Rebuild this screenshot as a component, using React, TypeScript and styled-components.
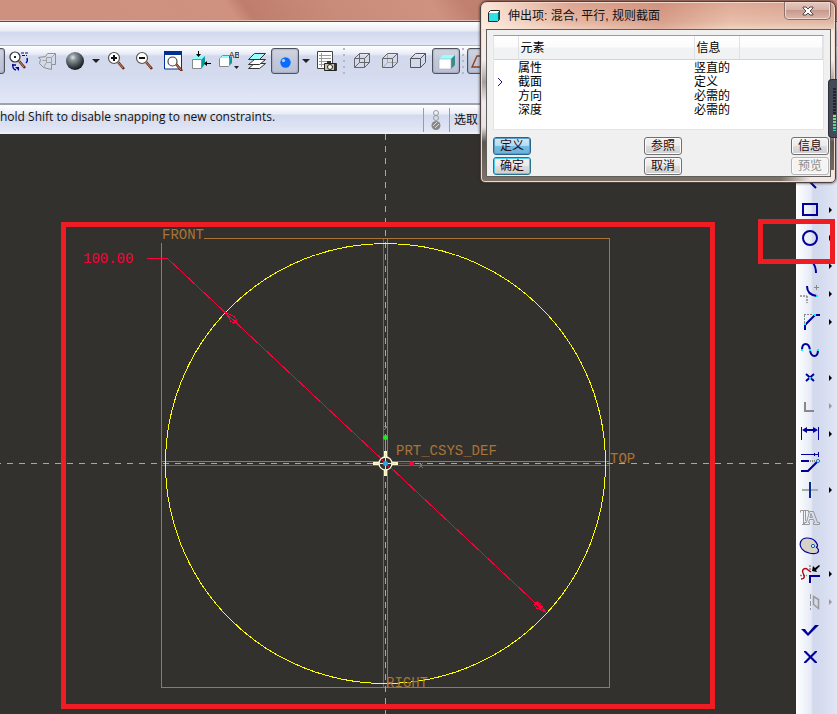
import React from 'react';
import styled, { createGlobalStyle } from 'styled-components';

const UI = '"Noto Sans", "Noto Sans CJK SC", sans-serif';
const CJK = '"Liberation Sans", "Noto Sans CJK SC", sans-serif';
const NAVY = '#00009c';
const CYAN = '#00f0ff';
const TAN = '#a87438';
const AXIS = '#ff9a0e';
const RED = '#ff0038';

const GlobalStyle = createGlobalStyle`
  *, *::before, *::after { box-sizing: border-box; }
  body { margin: 0; font-family: ${UI}; }
  button { font: inherit; padding: 0; margin: 0; border: 0; background: none; color: inherit; }
`;

const Page = styled.div`
  position: relative;
  display: flex;
  flex-direction: column;
  min-height: 100vh;
  overflow: hidden;
  background: #33312d;
`;

const WindowTitle = styled.header`
  height: 22px;
  background: linear-gradient(55deg, #ce9180 0 12%, #d0917f 28%, #bf7e6d 30%, #c98b79 40%, #cf9281 52%, #c08070 56%, #cb8b79 100%);
  border-bottom: 1px solid #6b4745;
  box-shadow: inset 0 -1px 0 #e2bdb3;
`;

const MenuStrip = styled.div`
  height: 24px;
  border-bottom: 1px solid #b3b6c6;
  background: linear-gradient(#ffffff 0, #e9edf5 9px, #d2d9ec 10px, #e2e7f7 100%);
`;

const Toolbar = styled.div`
  display: flex;
  align-items: flex-start;
  height: 59px;
  padding-top: 2px;
  overflow: hidden;
  border-bottom: 2px solid #a2a3aa;
  background: linear-gradient(#ffffff 0, #e8ecf5 8px, #d2d9ed 10px, #d4dbef 30px, #e3e8f8 100%);
`;

const ToolButton = styled.button<{ $on?: boolean; $clipped?: boolean }>`
  display: flex;
  flex: none;
  align-items: center;
  justify-content: center;
  width: 28px;
  height: 26px;
  margin-left: ${(p) => (p.$clipped ? '-23px' : '0')};
  border: ${(p) => (p.$on ? '1px solid #4e5260' : '1px solid transparent')};
  border-radius: 3px;
  background: ${(p) => (p.$on ? 'linear-gradient(#d2d6e0 0, #c3c9da 45%, #b9c1d8 100%)' : 'none')};
  box-shadow: ${(p) => (p.$on ? 'inset 0 0 2px #777c8c' : 'none')};
`;

const DropArrow = styled.button`
  display: flex;
  flex: none;
  align-items: center;
  justify-content: center;
  width: 14px;
  height: 26px;
`;

const Grip = styled.span`
  flex: none;
  width: 7px;
  height: 26px;
  background:
    linear-gradient(#b4b7c4, #b4b7c4) 2px 0 / 2px 2px no-repeat,
    linear-gradient(#b4b7c4, #b4b7c4) 2px 6px / 2px 2px no-repeat,
    linear-gradient(#b4b7c4, #b4b7c4) 2px 12px / 2px 2px no-repeat,
    linear-gradient(#b4b7c4, #b4b7c4) 2px 18px / 2px 2px no-repeat,
    linear-gradient(#b4b7c4, #b4b7c4) 2px 24px / 2px 2px no-repeat;
`;

const StatusBar = styled.div`
  display: flex;
  align-items: stretch;
  height: 29px;
  overflow: hidden;
  border-bottom: 2px solid #eef0f4;
  background: linear-gradient(#ffffff 0, #e9edf6 9px, #d3daee 10px, #e3e7f6 100%);
`;

const Message = styled.p`
  flex: 0 0 423px;
  margin: 0;
  font: 13px/24px "Open Sans", ${UI};
  font-size: 12px;
  white-space: nowrap;
  color: #111;
`;

const StatusCell = styled.div`
  display: flex;
  align-items: center;
  min-width: 26px;
  margin-top: 3px;
  padding: 0 4px;
  border-left: 1px solid #9a9ca5;
  font: 12px/20px ${CJK};
  color: #111;
`;

const Workspace = styled.main`
  display: flex;
  flex: 1;
`;

const Canvas = styled.section`
  position: relative;
  flex: 1;
  min-width: 0;
  overflow: hidden;
  background: #33312d;
`;

const Drawing = styled.svg`
  display: block;
  width: 100%;
  height: 100%;
`;

const Marker = styled.div`
  position: absolute;
  border: 5px solid #ee1c23;
  pointer-events: none;
`;

const SketchMarker = styled(Marker)`
  left: 61px;
  top: 88px;
  width: 654px;
  height: 487px;
`;

const ToolMarker = styled(Marker)`
  right: 2px;
  top: 219px;
  width: 77px;
  height: 45px;
`;

const SideBar = styled.nav`
  display: flex;
  flex: none;
  flex-direction: column;
  width: 41px;
  padding-top: 34px;
  background: linear-gradient(to right, #ffffff 0, #f4f7fc 6px, #e6eaf5 15px, #d2d9ed 17px, #d5dcf0 26px, #e2e6f5 100%);
`;

const SideButton = styled.button`
  display: flex;
  align-items: center;
  gap: 8px;
  height: 28px;
  padding-left: 3px;
`;

const Dialog = styled.section`
  position: absolute;
  top: 1px;
  right: 1px;
  width: 356px;
  padding: 0 4px 5px 5px;
  border: 1px solid #4b4140;
  border-radius: 7px 7px 5px 5px;
  background:
    linear-gradient(to right, rgba(255,255,255,0) 300px, rgba(248,240,238,0.95) 330px) 0 100% / 100% 12px no-repeat,
    linear-gradient(to right, rgba(255,238,226,0.9) 0, rgba(226,170,150,0.3) 90px, rgba(200,130,110,0.5) 180px, rgba(232,190,172,0.3) 250px, rgba(190,150,140,0.2) 100%) 0 0 / 100% 27px no-repeat,
    linear-gradient(#d9a18c 0, #e8bfa9 20px, #fbeade 30px, #f2eeee 58px, #a9a09c 80px, #eeeaf0 100px, #e9e3e4 125px, #5d554e 140px, #7f7365 100%);
  box-shadow: inset 0 0 0 1px #f2d9cd, 0 0 3px #2b2523;
`;

const DialogBar = styled.header`
  display: flex;
  align-items: center;
  gap: 8px;
  height: 27px;
  padding-left: 2px;
`;

const DialogTitle = styled.h1`
  flex: 1;
  margin: 0;
  font: 12px/20px ${CJK};
  color: #111;
`;

const CloseButton = styled.button`
  display: flex;
  align-self: flex-start;
  align-items: center;
  justify-content: center;
  width: 47px;
  height: 18px;
  border: 1px solid #8e706a;
  border-top: 0;
  border-radius: 0 0 5px 5px;
  background: linear-gradient(#e5c8bf 0, #d9b3a7 45%, #c69a8d 50%, #dcb8ac 100%);
  box-shadow: inset 0 0 0 1px #eed8d0;
`;

const DialogBody = styled.div`
  height: 148px;
  padding: 5px 0 0 6px;
  border: 1px solid #625e5b;
  background: #f0f0f0;
`;

const ListBox = styled.div`
  height: 95px;
  margin-right: 6px;
  border: 1px solid #e1e4ea;
  border-top-color: #9b9b9b;
  background: #fff;
`;

const Table = styled.table`
  width: 100%;
  border-collapse: collapse;
  table-layout: fixed;
  font: 12px/14px ${CJK};
  color: #000;
  text-align: left;
  white-space: nowrap;
`;

const Th = styled.th<{ $w?: number }>`
  width: ${(p) => (p.$w ? `${p.$w}px` : 'auto')};
  height: 23px;
  padding: 2px 0 0 2px;
  border-right: 1px solid #dfe1e4;
  border-bottom: 1px solid #d2d4d8;
  background: linear-gradient(#ffffff 0, #fbfbfc 48%, #f1f2f4 52%, #f1f2f4 100%);
  font-weight: 400;
`;

const Td = styled.td`
  height: 14px;
  padding: 0;
`;

const TableRow = styled.tr`
  tbody &:first-child > td { height: 15px; padding-top: 1px; }
`;

const Actions = styled.div`
  display: grid;
  grid-template-columns: 151px 1fr auto;
  row-gap: 2px;
  margin: 7px 1px 0 0;
`;

const Action = styled.button<{ $kind?: 'active' | 'default' }>`
  width: 38px;
  height: 18px;
  border: 1px solid ${(p) => (p.$kind === 'active' ? '#2c628b' : p.$kind === 'default' ? '#27748f' : '#707070')};
  border-radius: 3px;
  background: ${(p) =>
    p.$kind === 'active'
      ? 'linear-gradient(#d3ebf8 0, #b1dbf2 48%, #72bbe4 52%, #68b3db 100%)'
      : 'linear-gradient(#f3f3f3 0, #ebebeb 48%, #dddddd 52%, #cfcfcf 100%)'};
  box-shadow: inset 0 0 0 1px ${(p) => (p.$kind === 'active' ? '#5a9cc4' : p.$kind === 'default' ? '#4cd0f0' : '#fbfbfb')};
  font: 12px/16px ${CJK};
  color: #2c0a0a;

  &:disabled {
    border-color: #b5b5b5;
    background: #f4f4f4;
    color: #8c8c8c;
  }
`;

const Meter = styled.aside`
  position: absolute;
  top: 79px;
  right: 0;
  width: 9px;
  height: 59px;
  padding: 7px 1px 6px 4px;
  border: 1px solid #2c2f38;
  border-right: 0;
  border-radius: 4px 0 0 4px;
  background: #454956;
`;

const MeterBars = styled.div`
  height: 100%;
  background:
    repeating-linear-gradient(#454956 0 1px, transparent 1px 3px),
    linear-gradient(#23252e 0 27px, #a6e05c 28px, #5fe08a 34px, #35d0c0 100%);
`;

const Icon = ({ children }: { children: React.ReactNode }) => (
  <svg width="20" height="20" viewBox="0 0 20 20" fill="none" aria-hidden="true">
    {children}
  </svg>
);

const Down = () => (
  <svg width="8" height="4" viewBox="0 0 8 4" aria-hidden="true">
    <path d="M0 0h8L4 4z" fill="#222" />
  </svg>
);

const Handle = ({ x, y }: { x: number; y: number }) => (
  <>
    <path d={`M${x} ${y}l6 7`} stroke="#6a2a18" strokeWidth="2.6" />
    <path d={`M${x} ${y}l5 6`} stroke="#d88a5c" strokeWidth="1" />
  </>
);

const icons = {
  reorient: (
    <Icon>
      <path d="M12 2h7M13 4.500h5" stroke={NAVY} strokeDasharray="3 1" />
      <path d="M18 7q1 3-1 5M4 13q-1 5 3 6M7 14h-4" stroke={NAVY} strokeWidth="1.400" />
      <path d="M6 16h4v4z" fill={NAVY} />
      <circle cx="6" cy="6" r="5" fill="#fff" stroke="#333" strokeWidth="1.200" />
      <path d="M5 6h2M6 5v2" stroke="#111" strokeWidth="1.400" />
      <Handle x={10} y={10} />
    </Icon>
  ),
  refit: (
    <Icon>
      <path d="M1.500 6.500l7-1 2-3h8v11h-4v5l-8-2-4-4 1-4z" stroke="#909090" />
      <path d="M9.500 6.500h5v5h-5zM14.500 6.500l4-4M9.500 11.500l-3 5M14.500 11.500v2M9.500 6.500l-1-1M5.500 9.500h4" stroke="#a2a2a2" />
    </Icon>
  ),
  sphere: (
    <Icon>
      <defs>
        <radialGradient id="ball" cx=".38" cy=".3" r=".7">
          <stop offset="0" stopColor="#dfe5e8" />
          <stop offset=".25" stopColor="#8d979c" />
          <stop offset=".65" stopColor="#4a5357" />
          <stop offset="1" stopColor="#16191b" />
        </radialGradient>
      </defs>
      <circle cx="10" cy="10" r="9" fill="url(#ball)" />
    </Icon>
  ),
  zoomIn: (
    <Icon>
      <Handle x={11} y={11} />
      <circle cx="7" cy="7" r="5.500" fill="#fff" stroke="#555" strokeWidth="1.200" />
      <path d="M4 7h6M7 4v6" stroke="#111" strokeWidth="2" />
    </Icon>
  ),
  zoomOut: (
    <Icon>
      <Handle x={11} y={11} />
      <circle cx="7" cy="7" r="5.500" fill="#fff" stroke="#555" strokeWidth="1.200" />
      <path d="M4 7h6" stroke="#111" strokeWidth="2" />
    </Icon>
  ),
  zoomFit: (
    <Icon>
      <path d="M1.500 1h17v17h-17z" fill="#fff" stroke="#003090" />
      <path d="M1 0h18v4H1z" fill="#003090" />
      <Handle x={13} y={13} />
      <circle cx="9.500" cy="10.500" r="4.500" fill="#fff" stroke="#444" strokeWidth="1.200" />
    </Icon>
  ),
  orient: (
    <Icon>
      <path d="M1 8l3-3h10l-3 3z" fill="#8ff" />
      <path d="M11 8l3-3v8l-3 4z" fill="#0a9a9a" />
      <path d="M1.500 8.500h9v9h-9z" fill="#fff" stroke="#888" />
      <path d="M7.500 0v5M20 12.500h-5" stroke="#000" />
      <path d="M5 3h5L7.500 6zM16 10v5l-3-2.500z" fill="#000" />
    </Icon>
  ),
  savedViews: (
    <Icon>
      <path d="M0 7l3-3h8l-1 3z" fill="#8ff" />
      <path d="M10 8l3-3v7l-3 3z" fill="#0a9a9a" />
      <path d="M.5 7.500l3-3h7v10l-1 1h-9z" fill="#fff" stroke="#888" />
      <path d="M1 7l3-2h6L9 7z" fill="#8ff" />
      <path d="M15 15h5l-2.500 3z" fill="#222" />
      <text x="10" y="7" fontSize="9" fontFamily="Liberation Mono, monospace" fill="#111">AB</text>
    </Icon>
  ),
  layers: (
    <Icon>
      <path d="M1.500 17.500l6-5h11l-6 5z" fill="#fff" stroke="#333" />
      <path d="M1.500 13.500l6-5h11l-6 5z" fill="#fff" stroke="#333" />
      <path d="M1.500 8.500l6-6h11l-6 6z" fill="#9ff" stroke="#333" />
    </Icon>
  ),
  dot: (
    <Icon>
      <circle cx="10.500" cy="11.500" r="5.200" fill="#0a6cff" />
      <circle cx="8.500" cy="9.500" r="1.600" fill="#a8d8ff" />
    </Icon>
  ),
  viewManager: (
    <svg width="22" height="22" viewBox="0 0 22 22" fill="none" aria-hidden="true">
      <path d="M1.500 1.500h15v17h-15z" fill="#fff" stroke="#444" />
      <path d="M3 5.500h12M3 8.500h12M3 11.500h12M3 14.500h6M5.500 3v14" stroke="#999" />
      <path d="M8.500 13.500h12v7h-12z" fill="#c9c3a3" stroke="#222" />
      <path d="M11 11h4v2h-4z" fill="#333" />
      <path d="M18 14h3v6h-3z" fill="#333" />
      <circle cx="14" cy="17" r="2.500" fill="#fff" stroke="#222" />
    </svg>
  ),
  wireframe: (
    <Icon>
      <path d="M2.500 7.500h10v9h-10zM7.500 2.500h10v9h-10zM2.500 7.500l5-5M12.500 7.500l5-5M2.500 16.500l5-5M12.500 16.500l5-5" stroke="#666" />
    </Icon>
  ),
  hiddenLine: (
    <Icon>
      <path d="M7.500 3v8.500H17M3 16.500l4.500-5" stroke="#aaa" />
      <path d="M2.500 7.500h10v9h-10zM2.500 7.500l5-5h10v9l-5 5M12.500 7.500l5-5" stroke="#666" />
    </Icon>
  ),
  noHidden: (
    <Icon>
      <path d="M2.500 7.500h10v9h-10zM2.500 7.500l5-5h10v9l-5 5M12.500 7.500l5-5" stroke="#555" />
    </Icon>
  ),
  shaded: (
    <Icon>
      <path d="M3 8l4-4h12l-4 4z" fill="#9ff" />
      <path d="M15 8l4-4v10l-4 4z" fill="#3a8a90" />
      <path d="M3 8h12v10H3z" fill="#fff" stroke="#aaa" strokeWidth=".6" />
    </Icon>
  ),
  plane: (
    <Icon>
      <path d="M1 16L6 5h12l-5 11z" stroke="#8a4420" strokeWidth="1.400" />
    </Icon>
  ),
};

const sideTools: { name: string; more?: boolean; dim?: boolean; art: React.ReactNode }[] = [
  { name: '线', art: <path d="M5 4l12 12" stroke={NAVY} strokeWidth="2" /> },
  { name: '矩形', more: true, art: <path d="M4 4h14v11H4z" stroke={NAVY} strokeWidth="2" /> },
  { name: '圆', more: true, art: <circle cx="11" cy="10" r="7" stroke={NAVY} strokeWidth="2" /> },
  { name: '弧', more: true, art: <path d="M14 7q3 4 3 10" stroke={NAVY} strokeWidth="2" /> },
  {
    name: '圆角', more: true,
    art: (<>
      <path d="M15 3.500h5M17.500 1v5" stroke="#888" />
      <path d="M1 12h7M8 12v7" stroke="#888" strokeWidth="1.500" strokeDasharray="2 1" />
      <path d="M8 2q0 9 10 10" stroke={NAVY} strokeWidth="2" />
      <path d="M17 11h2v2h-2z" fill={CYAN} />
    </>),
  },
  {
    name: '倒角', more: true,
    art: (<>
      <path d="M5.500 3v10M5 2.500h9" stroke="#888" strokeDasharray="2 1" />
      <path d="M6 18v-5L16 3h5" stroke={NAVY} strokeWidth="2" />
      <path d="M5 11h2v2H5zM15 2h2v2h-2z" fill={CYAN} />
    </>),
  },
  {
    name: '样条',
    art: (<>
      <path d="M3 10c0-8 7-8 8 0s8 8 8 0" stroke={NAVY} strokeWidth="2" />
      <path d="M2 9h2v2H2zM10 9h2v2h-2zM18 9h2v2h-2z" fill={CYAN} />
    </>),
  },
  {
    name: '点', more: true,
    art: (<>
      <path d="M7 6l8 7M15 6l-8 7" stroke={NAVY} strokeWidth="2" />
      <path d="M10 9h2v2h-2z" fill={CYAN} />
    </>),
  },
  { name: '坐标系', more: true, dim: true, art: <path d="M6 6v9h9" stroke="#888" strokeWidth="2" /> },
  {
    name: '尺寸', more: true,
    art: (<>
      <path d="M2.500 3v13M19.500 3v13" stroke={NAVY} />
      <path d="M5 6h12" stroke={NAVY} strokeWidth="2" />
      <path d="M3 6l5-3v6zM19 6l-5-3v6z" fill={NAVY} />
    </>),
  },
  {
    name: '修改',
    art: (<>
      <path d="M2 2.500h17M19.500 0v5M15.500 1v3" stroke={NAVY} />
      <path d="M2 9h8M2 19h7l9-9" stroke={NAVY} strokeWidth="2" />
      <path d="M11 9h6" stroke="#888" strokeWidth="2" strokeDasharray="1 1" />
      <circle cx="19" cy="9" r="1.500" fill="#fff" stroke="#0068c0" />
    </>),
  },
  {
    name: '约束', more: true,
    art: (<>
      <path d="M3 10h16" stroke="#aaa" strokeWidth="2" />
      <path d="M11 2v16" stroke="#003090" strokeWidth="2" />
    </>),
  },
  {
    name: '文本',
    art: (<>
      <path d="M1.500 2.500h8v2M1.500 4.500v-2M4.500 3v13.500M6.500 3v10M3 16.500h3" stroke="#999" />
      <path d="M10.500 3.500h4l4 11h2v2h-6v-2h1l-1-3h-4l-1 3h1v2h-5v-2h2zM11 9.500h2.500l-1.500-4z" stroke="#999" />
    </>),
  },
  {
    name: '调色板',
    art: (<>
      <path d="M8 2C2 2-1 8 3 13c4 5 12 5 15 4 3-2 1-5-1-6 3 0 1-4-1-6-2-2-5-3-8-3z" fill="#d6d3c6" stroke={NAVY} strokeWidth="1.200" />
      <circle cx="14" cy="10" r="1.600" fill="#fff" stroke="#0050b0" />
    </>),
  },
  {
    name: '修剪', more: true,
    art: (<>
      <path d="M1 11.500h7M11 1v7" stroke="#888" strokeWidth="1.500" strokeDasharray="2 1" />
      <path d="M2 15c5 0 3-4 2-6-2-4 3-6 5-3l3 2" stroke="#b00000" strokeWidth="1.300" />
      <path d="M11 19v-7h10" stroke={NAVY} strokeWidth="2" />
      <path d="M13 7l1-5 2 2 4-3 1 1-4 4 1 2z" fill="#000" />
    </>),
  },
  {
    name: '镜像', more: true, dim: true,
    art: (<>
      <path d="M11.500 2v16" stroke="#999" strokeDasharray="5 2" />
      <path d="M14.500 4.500l5 3v9l-5-4z" stroke="#999" strokeWidth="1.500" />
    </>),
  },
  { name: '完成', art: <path d="M2 9h4l3 4 7-8h4L9 16z" fill={NAVY} /> },
  { name: '退出', art: <path d="M5 3h2l4.500 4.500L16 3h2v1l-5 5 5 5v1h-2l-4.500-4.500L7 15H5v-1l5-5-5-5z" fill={NAVY} /> },
];

const rows = [
  { mark: false, element: '属性', info: '竖直的' },
  { mark: true, element: '截面', info: '定义' },
  { mark: false, element: '方向', info: '必需的' },
  { mark: false, element: '深度', info: '必需的' },
];

const Label = styled.text`
  font: 14px "Liberation Mono", monospace;
  fill: ${TAN};
`;

const ValueLabel = styled(Label)`
  fill: ${RED};
`;

const Sketch = () => (
  <Drawing fill="none" role="img" aria-label="草绘截面">
    <g shapeRendering="crispEdges">
      <path d="M383.500 104v450M161 331.500h448" stroke="#6b6a66" />
      <path d="M161.500 109v444.500h448v-449H204M387.500 104v450M161 327.500h448" stroke={TAN} />
      <line x1="385.500" y1="0" x2="385.500" y2="100%" stroke={AXIS} strokeDasharray="6 6" />
      <line x1="-5" y1="329.500" x2="100%" y2="329.500" stroke={AXIS} strokeDasharray="6 6" />
      <circle cx="385.500" cy="329.500" r="220" stroke="#ffff00" />
      <path d="M147 124.500h20.500L546 479" stroke={RED} />
      <path d="M225.500 178l5 9 3 2 3-3-2-3zM228 182l7 5M545.500 478l-5-8-3-2-3 3 2 3zM543 474l-7-5" stroke={RED} />
      <path d="M385.500 303v18" stroke="#20e820" />
      <path d="M397 329.500h14" stroke={RED} />
      <path d="M419 329l4 5M423 329l-4 5M383 291l3 3M388 291l-4 5" stroke="#77756f" />
    </g>
    <circle cx="385.500" cy="303.500" r="2.500" fill="#20e820" />
    <circle cx="411.500" cy="329.500" r="2.500" fill={RED} />
    <path d="M385.500 317v25M373 329.500h25" stroke="#fffbc8" strokeWidth="3" />
    <circle cx="385.500" cy="329.500" r="6.500" fill="#33312d" stroke="#fffbd8" strokeWidth="1.300" />
    <path d="M385.500 319v21M375 329.500h21" stroke="#ffff00" strokeWidth="1" />
    <path d="M381 325l9 9" stroke={RED} />
    <circle cx="385.500" cy="329.500" r="2.500" fill="#20a8f0" />
    <Label x="162" y="105">FRONT</Label>
    <Label x="396" y="321">PRT_CSYS_DEF</Label>
    <Label x="610" y="329">TOP</Label>
    <Label x="386" y="553">RIGHT</Label>
    <ValueLabel x="83" y="129">100.00</ValueLabel>
  </Drawing>
);

const Tool = ({ name, icon, on, clipped }: { name: string; icon?: React.ReactNode; on?: boolean; clipped?: boolean }) => (
  <ToolButton type="button" aria-label={name} aria-pressed={on} $on={on} $clipped={clipped}>
    {icon}
  </ToolButton>
);

export default function App() {
  return (
    <Page>
      <GlobalStyle />
      <WindowTitle />
      <MenuStrip />
      <Toolbar>
        <Tool name="旋转中心" on clipped />
        <Tool name="定向模式" icon={icons.reorient} />
        <Tool name="重画" icon={icons.refit} />
        <Tool name="外观库" icon={icons.sphere} />
        <DropArrow type="button" aria-label="外观选项"><Down /></DropArrow>
        <Tool name="放大" icon={icons.zoomIn} />
        <Tool name="缩小" icon={icons.zoomOut} />
        <Tool name="重新调整" icon={icons.zoomFit} />
        <Tool name="重定向" icon={icons.orient} />
        <Tool name="已命名视图" icon={icons.savedViews} />
        <Tool name="层" icon={icons.layers} />
        <Tool name="渲染" icon={icons.dot} on />
        <DropArrow type="button" aria-label="渲染选项"><Down /></DropArrow>
        <Tool name="视图管理器" icon={icons.viewManager} />
        <Grip />
        <Tool name="线框" icon={icons.wireframe} />
        <Tool name="隐藏线" icon={icons.hiddenLine} />
        <Tool name="无隐藏线" icon={icons.noHidden} />
        <Tool name="着色" icon={icons.shaded} on />
        <Grip />
        <Tool name="基准平面" icon={icons.plane} on />
      </Toolbar>
      <StatusBar>
        <Message>hold Shift to disable snapping to new constraints.</Message>
        <StatusCell>
          <svg width="14" height="22" viewBox="0 0 14 22" fill="none" aria-hidden="true">
            <circle cx="8" cy="4" r="2.500" stroke="#999" />
            <circle cx="8" cy="9" r="2.500" stroke="#999" />
            <circle cx="8" cy="16.500" r="4.500" fill="#888" />
            <path d="M5 17l4-4M7 19l4-4" stroke="#ddd" />
          </svg>
        </StatusCell>
        <StatusCell>选取</StatusCell>
      </StatusBar>
      <Workspace>
        <Canvas>
          <Sketch />
          <SketchMarker />
        </Canvas>
        <SideBar aria-label="草绘工具">
          {sideTools.map((t) => (
            <SideButton key={t.name} type="button" aria-label={t.name} disabled={t.dim}>
              <svg width="22" height="20" viewBox="0 0 22 20" fill="none" overflow="visible" aria-hidden="true">
                {t.art}
              </svg>
              {t.more && (
                <svg width="3" height="6" viewBox="0 0 3 6" aria-hidden="true">
                  <path d="M0 0l3 3-3 3z" fill={t.dim ? '#999' : '#000'} />
                </svg>
              )}
            </SideButton>
          ))}
        </SideBar>
      </Workspace>
      <ToolMarker />
      <Dialog role="dialog" aria-labelledby="dialog-title">
        <DialogBar>
          <svg width="12" height="12" viewBox="0 0 12 12" aria-hidden="true">
            <path d="M.5 2.500l2-2h9v9l-2 2h-9z" fill="#fff" stroke="#222" />
            <path d="M1 3h8v8H1z" fill="#2fe0e8" />
            <path d="M9.500 3v8l2-2V1z" fill="#066" />
          </svg>
          <DialogTitle id="dialog-title">伸出项: 混合, 平行, 规则截面</DialogTitle>
          <CloseButton type="button" aria-label="关闭">
            <svg width="12" height="10" viewBox="0 0 12 10" aria-hidden="true">
              <path d="M1 1h3l2 2 2-2h3v1L8 5l3 3v1H8L6 7 4 9H1V8l3-3-3-3z" fill="#fff" stroke="#55484a" />
            </svg>
          </CloseButton>
        </DialogBar>
        <DialogBody>
          <ListBox>
            <Table>
              <thead>
                <tr>
                  <Th $w={24} aria-label="当前" />
                  <Th $w={176}>元素</Th>
                  <Th $w={45}>信息</Th>
                  <Th aria-label="其他" />
                </tr>
              </thead>
              <tbody>
                {rows.map((r) => (
                  <TableRow key={r.element}>
                    <Td>
                      {r.mark && (
                        <svg width="12" height="9" viewBox="0 0 12 9" fill="none" aria-label="当前元素">
                          <path d="M4 1l4 4-4 4" stroke="#1a1080" />
                        </svg>
                      )}
                    </Td>
                    <Td>{r.element}</Td>
                    <Td>{r.info}</Td>
                    <Td />
                  </TableRow>
                ))}
              </tbody>
            </Table>
          </ListBox>
          <Actions>
            <Action type="button" $kind="active">定义</Action>
            <Action type="button">参照</Action>
            <Action type="button">信息</Action>
            <Action type="button" $kind="default">确定</Action>
            <Action type="button">取消</Action>
            <Action type="button" disabled>预览</Action>
          </Actions>
        </DialogBody>
      </Dialog>
      <Meter aria-label="音量"><MeterBars /></Meter>
    </Page>
  );
}
